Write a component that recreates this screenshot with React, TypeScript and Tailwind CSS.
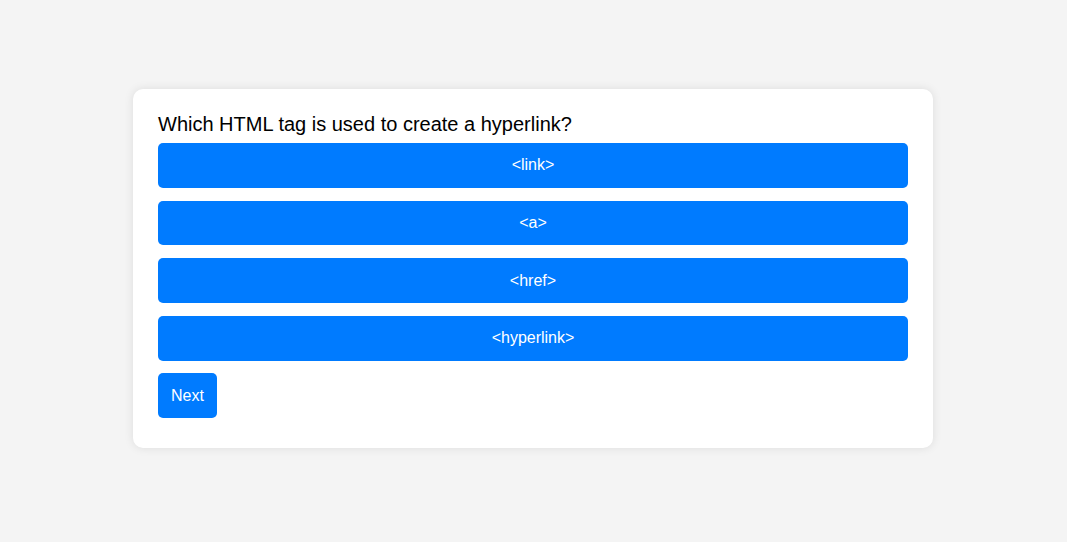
import React from "react";

const options = ["<link>", "<a>", "<href>", "<hyperlink>"];

export default function App() {
  return (
    <div
      className="min-h-screen w-full bg-[#f4f4f4] flex justify-center pt-[89px] pr-[1px]"
      style={{ fontFamily: '"Liberation Sans", Arial, sans-serif' }}
    >
      <div className="w-[800px] h-[359px] bg-white rounded-[10px] shadow-[0_0_10px_rgba(0,0,0,0.1)] px-[25px] pt-[24px]">
        <h2 className="text-[20px] leading-[23px] text-black font-normal">
          Which HTML tag is used to create a hyperlink?
        </h2>
        <div className="mt-[7px] flex flex-col gap-[12.8px]">
          {options.map((o) => (
            <button
              key={o}
              className="w-full h-[44.8px] bg-[#007bff] text-white text-[16px] rounded-[5px] flex items-center justify-center"
            >
              {o}
            </button>
          ))}
          <button className="self-start w-[59px] h-[44.8px] bg-[#007bff] text-white text-[16px] rounded-[5px] flex items-center justify-center">
            Next
          </button>
        </div>
      </div>
    </div>
  );
}
